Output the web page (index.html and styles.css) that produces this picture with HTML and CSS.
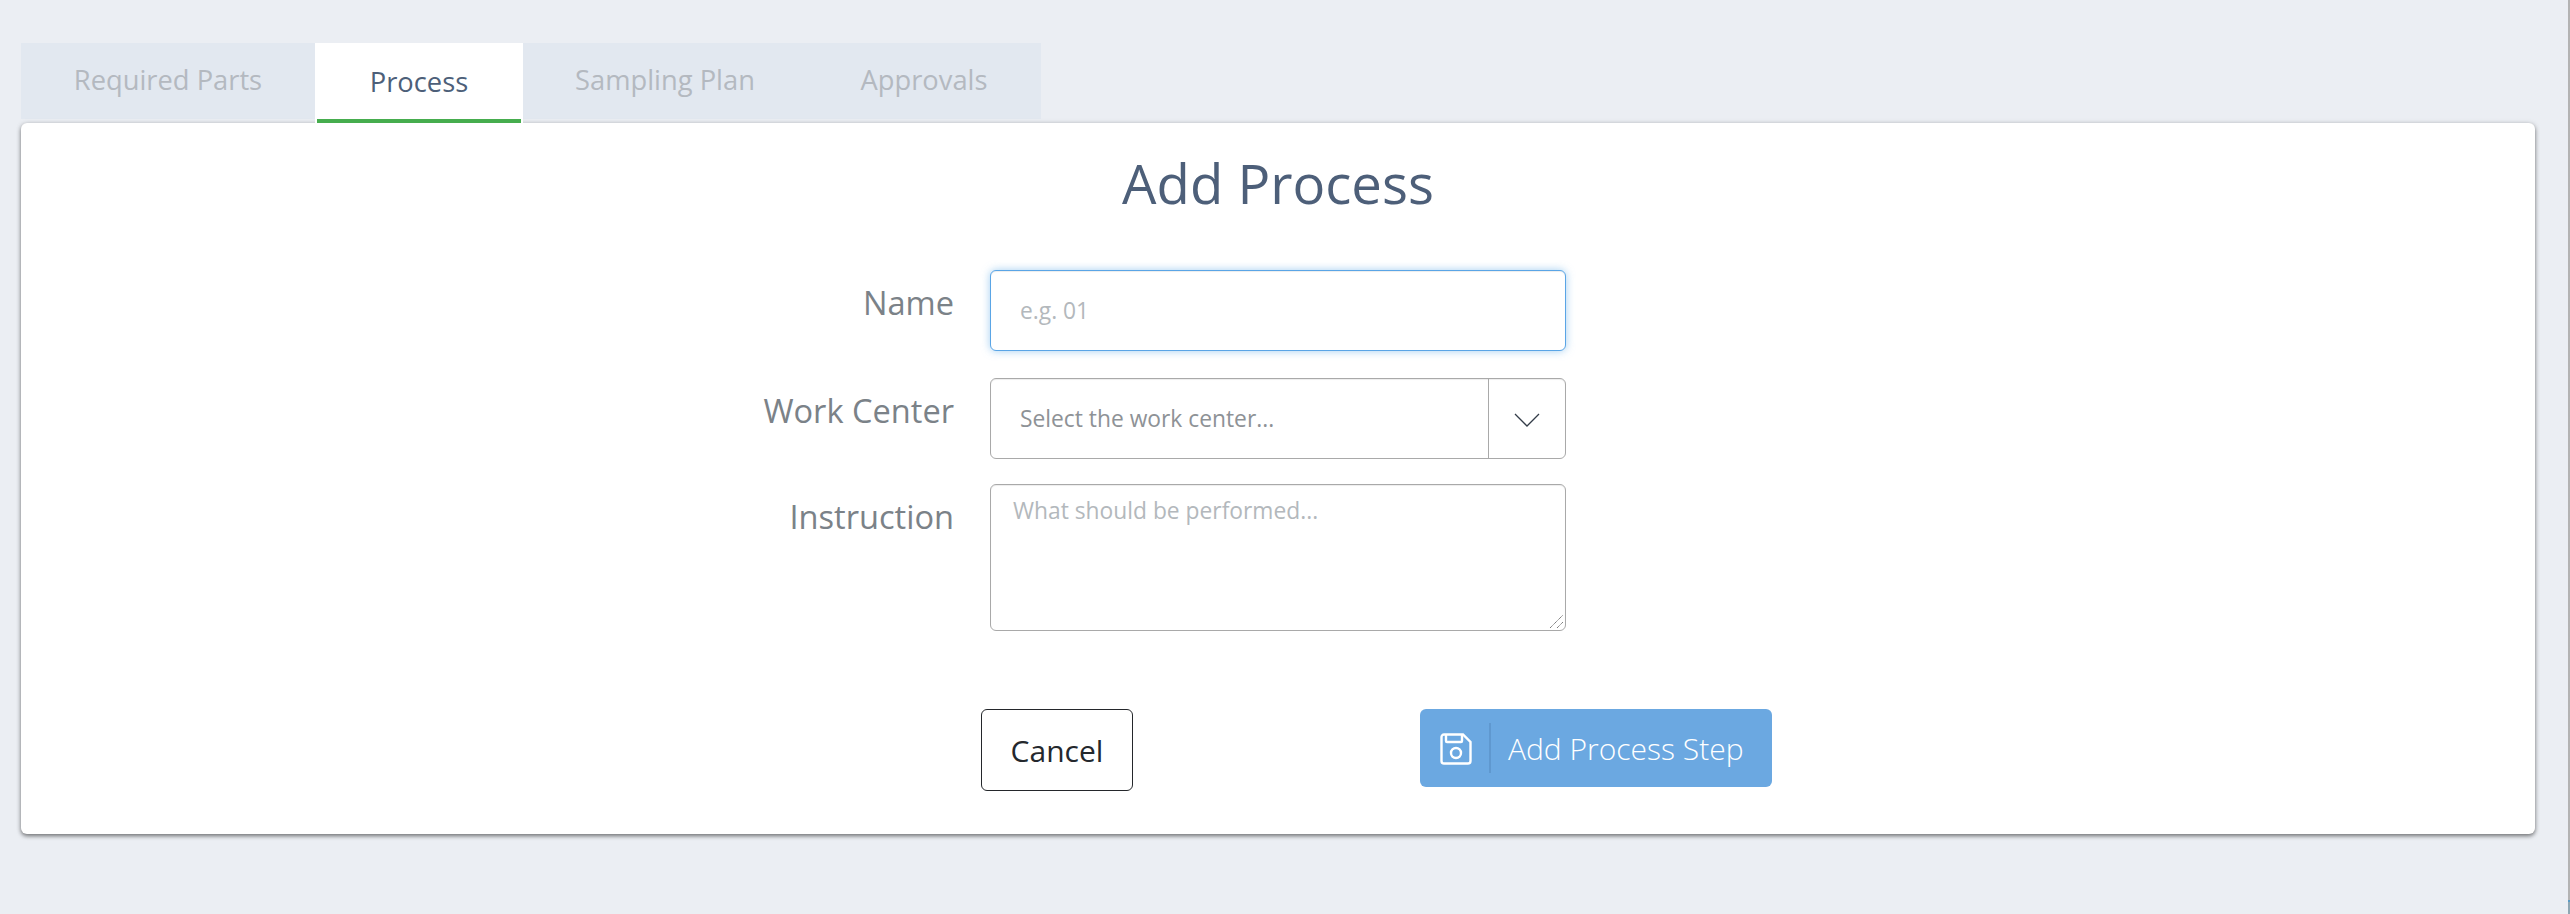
FILE: index.html
```html
<!DOCTYPE html>
<html lang="en">
<head>
<meta charset="utf-8">
<title>Add Process</title>
<link rel="stylesheet" href="styles.css">
</head>
<body>
<main class="page">
  <nav class="tabs">
    <a class="tab tab-parts">Required Parts</a>
    <a class="tab tab-process active">Process</a>
    <a class="tab tab-sampling">Sampling Plan</a>
    <a class="tab tab-approvals">Approvals</a>
  </nav>
  <section class="card">
    <h1 class="title">Add Process</h1>
    <form class="form">
      <div class="row row-name">
        <label class="label">Name</label>
        <div class="field input focused"><span class="placeholder">e.g. 01</span></div>
      </div>
      <div class="row row-center">
        <label class="label">Work Center</label>
        <div class="field select">
          <span class="select-text">Select the work center...</span>
          <span class="select-arrow">
            <svg width="26" height="14" viewBox="0 0 26 14"><path d="M1 1 L13 13 L25 1" fill="none" stroke="#333c48" stroke-width="1.3"/></svg>
          </span>
        </div>
      </div>
      <div class="row row-last">
        <label class="label">Instruction</label>
        <div class="field textarea">
          <span class="textarea-text">What should be performed...</span>
          <svg class="grip" width="15" height="15" viewBox="0 0 15 15"><path d="M1 14 L14 1 M8 14 L14 8" stroke="#666" stroke-width="1" stroke-dasharray="1.2 .6" fill="none"/></svg>
        </div>
      </div>
      <div class="actions">
        <button type="button" class="btn cancel">Cancel</button>
        <button type="button" class="btn save">
          <span class="save-icon">
            <svg class="save-glyph" width="32" height="32" viewBox="0 0 32 32"><path d="M4 1.5 H23 L30.5 9 V28 A2.5 2.5 0 0 1 28 30.5 H4 A2.5 2.5 0 0 1 1.5 28 V4 A2.5 2.5 0 0 1 4 1.5 Z" fill="none" stroke="#fff" stroke-width="2.4"/><path d="M6 2 V8 A1 1 0 0 0 7 9 H21 A1 1 0 0 0 22 8 V2" fill="none" stroke="#fff" stroke-width="2.4"/><circle cx="16" cy="20" r="5" fill="none" stroke="#fff" stroke-width="2.4"/></svg>
          </span>
          <span class="save-text">Add Process Step</span>
        </button>
      </div>
    </form>
  </section>
</main>
<div class="edge"></div>
<div class="edge-foot"></div>
</body>
</html>
```
FILE: styles.css
```css
html, body { margin: 0; height: 100%; }
body {
  background: #ebeef3;
  font-family: "Open Sans", "Liberation Sans", sans-serif;
  overflow: hidden;
}
.page { padding: 43px 35px 0 21px; }
.tabs {
  display: flex;
  width: 1020px;
  height: 76px;
  background: #e2e8f0;
  margin-bottom: 4px;
}
.tab {
  box-sizing: border-box;
  display: flex;
  align-items: center;
  justify-content: center;
  font-size: 27.3px;
  color: #b4b9c0;
  padding-bottom: 4px;
}
.tab-parts { width: 294px; }
.tab-process { width: 208px; }
.tab-sampling { width: 284px; }
.tab-approvals { width: 234px; }
.tab.active {
  background: #fff;
  color: #4d5f79;
  height: 80px;
  position: relative;
  padding-bottom: 4px;
}
.tab.active::after {
  content: "";
  position: absolute;
  left: 2px;
  right: 2px;
  bottom: 0;
  height: 4px;
  background: #46ad4e;
}
.card {
  background: #fff;
  height: 711px;
  border-radius: 6px;
  box-shadow: 0 2px 4px rgba(0, 0, 0, .5), 0 0 6px rgba(0, 0, 0, .08);
  box-sizing: border-box;
  padding-top: 23px;
}
.title {
  margin: 0 0 50px;
  text-align: center;
  font-weight: 400;
  font-size: 54.5px;
  line-height: 74px;
  color: #4d5f79;
}
.form { display: flex; flex-direction: column; align-items: flex-start; }
.row { display: flex; }
.row-name { margin-bottom: 27px; }
.row-center { margin-bottom: 25px; }
.row-last { margin-bottom: 78px; }
.label {
  box-sizing: border-box;
  width: 933px;
  padding-top: 12px;
  text-align: right;
  font-size: 32.6px;
  line-height: 42px;
  color: #7b8288;
  margin-right: 36px;
}
.field {
  box-sizing: border-box;
  width: 576px;
  height: 81px;
  border: 1px solid #a9a9a9;
  border-radius: 6px;
  background: #fff;
  font-size: 22.8px;
  box-shadow: inset 0 1px 1px rgba(0, 0, 0, .075);
}
.input { display: flex; align-items: center; padding-left: 29px; }
.focused {
  border: 1px solid #5aa5e6;
  box-shadow: inset 0 1px 1px rgba(0, 0, 0, .075), 0 0 8px rgba(102, 175, 233, .6);
}
.placeholder { color: #b3b8bc; }
.select { display: flex; }
.select-text { flex: 1; display: flex; align-items: center; padding-left: 29px; color: #8e9296; }
.select-arrow {
  width: 77px;
  border-left: 1px solid #a9a9a9;
  display: flex;
  align-items: center;
  justify-content: center;
  padding-top: 3px;
  box-sizing: border-box;
}
.textarea { height: 147px; position: relative; padding: 10px 22px; color: #b3b8bc; }
.grip { position: absolute; right: 1px; bottom: 1px; }
.actions { display: flex; align-items: flex-start; padding-left: 960px; }
.btn { font-family: inherit; box-sizing: border-box; padding: 0; cursor: pointer; }
.cancel {
  width: 152px;
  height: 82px;
  background: #fff;
  border: 1px solid #24272b;
  border-radius: 6px;
  font-size: 30px;
  font-weight: 400;
  color: #24282d;
  margin-right: 287px;
}
.save {
  width: 352px;
  height: 78px;
  background: #6ba8e1;
  border: 0;
  border-radius: 6px;
  color: #fff;
  font-size: 30px;
  font-weight: 300;
  display: flex;
  align-items: center;
}
.save-icon {
  width: 71px;
  height: 50px;
  box-sizing: border-box;
  border-right: 2px solid #5f98cf;
  display: flex;
  align-items: center;
  justify-content: center;
  flex: none;
}
.save-glyph { margin: 2px 0 0 2px; }
.save-text { padding-left: 17px; }
.edge { position: fixed; top: 0; bottom: 0; right: 0; width: 2px; background: #b3b3b3; }
.edge-foot {
  position: fixed;
  top: 900px;
  bottom: 0;
  right: 0;
  width: 2px;
  background: #8fa7b3;
  border-top: 2px solid #5a9bc4;
  box-sizing: border-box;
}
```
